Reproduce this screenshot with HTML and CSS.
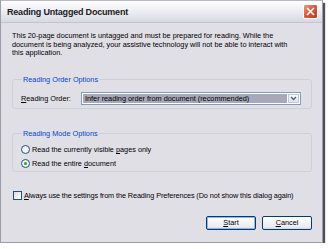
FILE: index.html
```html
<!DOCTYPE html>
<html lang="en">
<head>
  <meta charset="UTF-8" />
  <title>Reading Untagged Document</title>
  <link rel="stylesheet" href="styles.css">
</head>
<body>

<div class="window">
  <div class="titlebar">
    <span class="title">Reading Untagged Document</span>
    <span class="close">
      <svg width="9" height="9" viewBox="0 0 9 9"><path d="M1 1 L8 8 M8 1 L1 8" stroke="#fff" stroke-width="1.6" /></svg>
    </span>
  </div>

  <div class="content">
    <p class="intro">This 20-page document is untagged and must be prepared for reading. While the document is being analyzed, your assistive technology will not be able to interact with this application.</p>

    <fieldset class="group order">
      <legend>Reading Order Options</legend>
      <div class="row">
        <label class="field-label"><u>R</u>eading Order:</label>
        <div class="select">
          <span class="value">Infer reading order from document (recommended)</span>
          <span class="arrow">
            <svg width="7" height="5" viewBox="0 0 7 5"><path d="M1 1 L3.5 3.5 L6 1" stroke="#4d6185" stroke-width="1.4" fill="none" /></svg>
          </span>
        </div>
      </div>
    </fieldset>

    <fieldset class="group mode">
      <legend>Reading Mode Options</legend>
      <label class="radio"><span class="dot"></span><span>Read the currently visible <u>p</u>ages only</span></label>
      <label class="radio"><span class="dot checked"></span><span>Read the entire <u>d</u>ocument</span></label>
    </fieldset>

    <label class="check"><span class="box"></span><span><u>A</u>lways use the settings from the Reading Preferences (Do not show this dialog again)</span></label>

    <div class="buttons">
      <button class="btn default"><u>S</u>tart</button>
      <button class="btn"><u>C</u>ancel</button>
    </div>
  </div>
</div>

</body>
</html>
```

FILE: styles.css
```css
body {
  margin: 0;
  background: #ffffff;
  font-family: 'Liberation Sans', Arial, sans-serif;
}

.window {
  box-sizing: border-box;
  width: 323px;
  height: 243px;
  background: #e0dfe6;
  border: 1px solid #9c9cac;
  border-top: none;
  box-shadow: 2px 3px 1px #505058;
  display: flex;
  flex-direction: column;
}

.titlebar {
  height: 21px;
  display: flex;
  align-items: center;
  justify-content: space-between;
  padding: 0 4px 0 6px;
  background: linear-gradient(to bottom, #ffffff, #eeeef4 45%, #d8d8e4);
  border-top: 1px solid #b8b8c8;
  border-bottom: 1px solid #c4c4d0;
}

.title {
  font-size: 9px;
  font-weight: bold;
  letter-spacing: -0.2px;
  color: #1a1a1a;
}

.close {
  width: 13px;
  height: 13px;
  border-radius: 2px;
  border: 1px solid #fff;
  background: linear-gradient(135deg, #e89a84, #d45a3c 50%, #c03c20);
  display: flex;
  align-items: center;
  justify-content: center;
}

.content {
  flex: 1;
  padding: 0 10px 0 11px;
  font-size: 7.3px;
  color: #000;
}

.intro {
  margin: 9px 0 0 0;
  max-width: 282px;
  line-height: 8.6px;
}

.group {
  margin: 0;
  padding: 0 8px;
  border: 1px solid #cfcfd6;
  border-radius: 3px;
}

.group legend {
  color: #0046d5;
  padding: 0 1px;
  margin-left: 1px;
}

.order {
  margin-top: 17px;
  height: 34px;
  box-sizing: border-box;
}

.row {
  display: flex;
  align-items: center;
  margin-top: 8px;
}

.field-label {
  width: 60px;
}

.select {
  display: flex;
  align-items: center;
  width: 220px;
  height: 13px;
  box-sizing: border-box;
  border: 1px solid #7f9db9;
  background: #fff;
  padding: 1px;
}

.select .value {
  flex: 1;
  height: 100%;
  background: #a8a8ba;
  display: flex;
  align-items: center;
  padding-left: 2px;
}

.select .arrow {
  width: 11px;
  height: 100%;
  margin-left: 1px;
  background: linear-gradient(to bottom, #fafafc, #e0e0ea);
  border: 1px solid #c6c6d6;
  box-sizing: border-box;
  display: flex;
  align-items: center;
  justify-content: center;
}

.mode {
  margin-top: 20px;
  height: 43px;
  box-sizing: border-box;
  padding-top: 5px;
}

.radio {
  display: flex;
  align-items: center;
  height: 14px;
}

.dot {
  width: 7px;
  height: 7px;
  border-radius: 50%;
  border: 1px solid #1c5180;
  background: #f4f4f4;
  margin-right: 2px;
  display: flex;
  align-items: center;
  justify-content: center;
}

.dot.checked::after {
  content: "";
  width: 3px;
  height: 3px;
  border-radius: 50%;
  background: #21a121;
}

.check {
  display: flex;
  align-items: center;
  margin-top: 19px;
  margin-left: 1px;
  letter-spacing: -0.1px;
}

.box {
  width: 7px;
  height: 7px;
  border: 1px solid #1c5180;
  background: linear-gradient(135deg, #dcdcd6, #fff);
  margin-right: 2px;
}

.buttons {
  display: flex;
  justify-content: flex-end;
  gap: 6px;
  margin-top: 16px;
}

.btn {
  width: 50px;
  height: 14px;
  padding: 0;
  font-family: inherit;
  font-size: 7.3px;
  color: #000;
  border: 1px solid #003c74;
  border-radius: 2px;
  background: linear-gradient(to bottom, #ffffff, #ececf2 80%, #d6d6e0);
}

.btn.default {
  box-shadow: inset 0 0 0 1px #98b4e4;
}
```
